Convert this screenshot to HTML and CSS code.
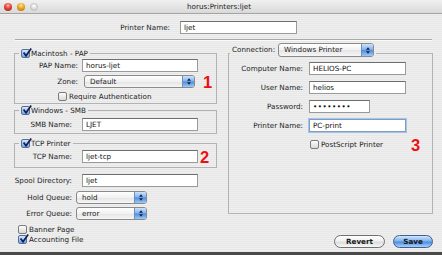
FILE: index.html
```html
<!DOCTYPE html>
<html lang="en">
<head>
  <meta charset="UTF-8" />
  <title>horus:Printers:ljet</title>
  <link rel="stylesheet" href="styles.css">
</head>
<body>
  <div class="window">
    <div class="titlebar">
      <div class="lights">
        <span class="light close"></span>
        <span class="light mini"></span>
        <span class="light zoom"></span>
      </div>
      <div class="title">horus:Printers:ljet</div>
    </div>

    <div class="content">
      <div class="nameRow">
        <label class="nameLabel">Printer Name:</label>
        <input class="field nameField" value="ljet">
      </div>
      <div class="separator"></div>

      <div class="columns">
        <div class="leftCol">
          <fieldset class="group pap">
            <legend class="groupHead">
              <span class="check on"><svg viewBox="0 0 10 10"><path d="M1.6 4.6 L4 7.8 L9.2 0.6"/></svg></span>
              Macintosh - PAP
            </legend>
            <div class="row">
              <label class="lbl">PAP Name:</label>
              <input class="field wide" value="horus-ljet">
            </div>
            <div class="row">
              <label class="lbl">Zone:</label>
              <div class="popup zonePopup">
                <span class="popupText">Default</span>
                <span class="popupCap"><svg viewBox="0 0 5 8"><path d="M2.5 0 L5 3 H0Z M0 5 H5 L2.5 8Z"/></svg></span>
              </div>
              <span class="mark mark1">1</span>
            </div>
            <div class="row checkRow authRow">
              <span class="check"></span>
              Require Authentication
            </div>
          </fieldset>

          <fieldset class="group smb">
            <legend class="groupHead">
              <span class="check on"><svg viewBox="0 0 10 10"><path d="M1.6 4.6 L4 7.8 L9.2 0.6"/></svg></span>
              Windows - SMB
            </legend>
            <div class="row">
              <label class="lbl short">SMB Name:</label>
              <input class="field wide" value="LJET">
            </div>
          </fieldset>

          <fieldset class="group tcp">
            <legend class="groupHead">
              <span class="check on"><svg viewBox="0 0 10 10"><path d="M1.6 4.6 L4 7.8 L9.2 0.6"/></svg></span>
              TCP Printer
            </legend>
            <div class="row">
              <label class="lbl short">TCP Name:</label>
              <input class="field wide" value="ljet-tcp">
              <span class="mark mark2">2</span>
            </div>
          </fieldset>

          <div class="spool">
            <div class="row">
              <label class="lbl spoolLbl">Spool Directory:</label>
              <input class="field wide" value="ljet">
            </div>
            <div class="row holdRow">
              <label class="lbl spoolLbl">Hold Queue:</label>
              <div class="popup queuePopup">
                <span class="popupText">hold</span>
                <span class="popupCap"><svg viewBox="0 0 5 8"><path d="M2.5 0 L5 3 H0Z M0 5 H5 L2.5 8Z"/></svg></span>
              </div>
            </div>
            <div class="row errorRow">
              <label class="lbl spoolLbl">Error Queue:</label>
              <div class="popup queuePopup">
                <span class="popupText">error</span>
                <span class="popupCap"><svg viewBox="0 0 5 8"><path d="M2.5 0 L5 3 H0Z M0 5 H5 L2.5 8Z"/></svg></span>
              </div>
            </div>
            <div class="checkRow bannerRow">
              <span class="check"></span>
              Banner Page
            </div>
            <div class="checkRow acctRow">
              <span class="check on"><svg viewBox="0 0 10 10"><path d="M1.6 4.6 L4 7.8 L9.2 0.6"/></svg></span>
              Accounting File
            </div>
          </div>
        </div>

        <div class="rightCol">
          <fieldset class="group conn">
            <legend class="connHead">
              <span>Connection:</span>
              <div class="popup connPopup">
                <span class="popupText">Windows Printer</span>
                <span class="popupCap"><svg viewBox="0 0 5 8"><path d="M2.5 0 L5 3 H0Z M0 5 H5 L2.5 8Z"/></svg></span>
              </div>
            </legend>
            <div class="connGrid">
              <label class="lbl">Computer Name:</label>
              <input class="field" value="HELIOS-PC">
              <label class="lbl">User Name:</label>
              <input class="field" value="helios">
              <label class="lbl">Password:</label>
              <input class="field pass" type="password" value="helios12">
              <label class="lbl">Printer Name:</label>
              <input class="field focused" value="PC-print">
              <div class="checkRow psRow">
                <span class="check"></span>
                PostScript Printer
              </div>
              <span class="mark mark3">3</span>
            </div>
          </fieldset>

          <div class="buttons">
            <button class="btn revert">Revert</button>
            <button class="btn save">Save</button>
          </div>
        </div>
      </div>
    </div>
  </div>
</body>
</html>
```

FILE: styles.css
```css
* {
  box-sizing: border-box;
}
body {
  margin: 0;
  width: 442px;
  height: 255px;
  overflow: hidden;
  background: #4a4a4a;
  font-family: "DejaVu Sans", sans-serif;
  font-size: 7.2px;
  color: #1c1c1c;
}
.window {
  height: 252px;
  display: flex;
  flex-direction: column;
  background: repeating-linear-gradient(to bottom, #efefef 0 1px, #e7e7e7 1px 2px);
}
.titlebar {
  height: 14px;
  flex: none;
  display: flex;
  align-items: center;
  border-bottom: 1px solid #a3a3a3;
  background: linear-gradient(#f0f0f0, #d9d9d9);
  position: relative;
}
.lights {
  display: flex;
  gap: 5px;
  padding-left: 4px;
}
.light {
  width: 8px;
  height: 8px;
  border-radius: 50%;
}
.close {
  background: radial-gradient(circle at 50% 30%, #ffb3a8 0, #e0443a 45%, #a3160e 100%);
}
.mini {
  background: radial-gradient(circle at 50% 30%, #ffe6a0 0, #eaa51e 45%, #a86a05 100%);
}
.zoom {
  background: radial-gradient(circle at 50% 30%, #ffffff 0, #e2e2e2 50%, #bcbcbc 100%);
  border: 1px solid #c4c4c4;
}
.title {
  flex: 1;
  text-align: center;
  margin-left: -42px;
  color: #222;
}
.content {
  flex: 1;
  padding: 0 9px 0 14px;
}
.nameRow {
  display: flex;
  align-items: center;
  gap: 10px;
  margin-top: 7px;
}
.nameLabel {
  width: 156px;
  text-align: right;
}
.field {
  height: 13px;
  border: 1px solid #9a9a9a;
  border-top-color: #6e6e6e;
  background: #fff;
  padding: 0 3px;
  font: inherit;
  color: #111;
  outline: none;
  margin: 0;
}
.nameField {
  width: 117px;
}
.separator {
  margin: 5px 1px 0 1px;
  height: 2px;
  border-top: 1px solid #a8a8a8;
  border-bottom: 1px solid #fbfbfb;
}
.columns {
  display: flex;
  gap: 11px;
  margin-top: 2px;
}
.leftCol {
  width: 203px;
  padding-top: 5px;
}
.rightCol {
  width: 205px;
}
.group {
  margin: 0;
  padding: 0;
  border: 1px solid #b2b2b2;
  min-inline-size: 0;
  position: relative;
}
.groupHead {
  display: flex;
  align-items: center;
  gap: 1px;
  height: 10px;
  margin-left: 4px;
  padding: 0 2px;
}
.row {
  display: flex;
  align-items: center;
  height: 13px;
}
.lbl {
  text-align: right;
  flex: none;
}
.pap {
  padding: 1px 0 1px 0;
}
.pap .row + .row {
  margin-top: 3px;
}
.pap .lbl {
  width: 63px;
  margin-right: 4px;
}
.wide {
  width: 116px;
}
.popup {
  display: flex;
  height: 13px;
  border: 1px solid #8a8a8a;
  border-radius: 3px;
  background: linear-gradient(#ffffff, #f1f1f1 50%, #e4e4e4 51%, #f6f6f6);
  overflow: hidden;
}
.popupText {
  flex: 1;
  padding-left: 5px;
  line-height: 11px;
}
.popupCap {
  width: 12px;
  display: flex;
  align-items: center;
  justify-content: center;
  border-left: 1px solid #6d8fbd;
  background: linear-gradient(#cfe3fb, #7fb0ec 48%, #4d8ddb 52%, #9ccaf7);
}
.popupCap svg {
  width: 4px;
  height: 7px;
}
.popupCap path {
  fill: #10244a;
}
.zonePopup {
  width: 111px;
  margin-left: 2px;
}
.mark {
  font-family: "Liberation Sans", sans-serif;
  font-weight: bold;
  font-size: 16.5px;
  line-height: 12px;
  color: #ee1010;
}
.mark1 {
  margin-left: 8px;
}
.mark2 {
  margin-left: 2px;
}
.checkRow {
  display: flex;
  align-items: center;
  gap: 2px;
}
.authRow {
  height: 11px;
  margin-top: 3px;
  padding-left: 43px;
}
.check {
  width: 9px;
  height: 9px;
  flex: none;
  border: 1px solid #7c7c7c;
  border-radius: 2px;
  background: linear-gradient(#fdfdfd, #d9d9d9);
  position: relative;
}
.check.on {
  border-color: #526f9b;
  background: linear-gradient(#d6e7fc, #76a6e3);
}
.check svg {
  position: absolute;
  left: 0;
  top: -2px;
  width: 10px;
  height: 10px;
  overflow: visible;
}
.check path {
  fill: none;
  stroke: #102054;
  stroke-width: 1.7;
}
.smb {
  margin-top: 1px;
  padding: 3px 0 2px 0;
}
.tcp {
  margin-top: 4px;
  padding: 2px 0 4px 0;
}
.short {
  width: 57px;
  margin-right: 10px;
}
.spool {
  margin-top: 6px;
}
.spoolLbl {
  width: 58px;
  margin-right: 10px;
}
.queuePopup {
  width: 71px;
  margin-left: -6px;
}
.holdRow {
  margin-top: 4px;
}
.errorRow {
  margin-top: 3px;
}
.bannerRow {
  height: 10px;
  margin-top: 4px;
  padding-left: 4px;
}
.acctRow {
  height: 10px;
  padding-left: 4px;
}
.conn {
  padding: 0 0 62px 0;
}
.connHead {
  display: flex;
  align-items: flex-start;
  gap: 3px;
  margin-left: 1px;
  padding: 0 2px 6px 2px;
}
.connHead > span {
  line-height: 14px;
}
.connPopup {
  width: 96px;
  height: 14px;
}
.connPopup .popupText {
  line-height: 12px;
}
.connGrid {
  display: grid;
  grid-template-columns: 74px 97px 1fr;
  grid-auto-rows: 13px;
  column-gap: 6px;
  row-gap: 6px;
  align-items: center;
  margin-top: -1px;
}
.connGrid .field {
  grid-column: 2;
}
.connGrid .lbl {
  grid-column: 1;
}
.pass {
  width: 61px;
  letter-spacing: 0.5px;
}
.focused {
  border-color: #7f9cc4;
  box-shadow: 0 0 0 1px #a9c4ea;
}
.psRow {
  grid-column: 2;
  padding-left: 1px;
}
.mark3 {
  grid-column: 3;
  margin-left: -1px;
}
.buttons {
  display: flex;
  justify-content: flex-end;
  gap: 8px;
  margin-top: 21px;
}
.btn {
  height: 13px;
  padding: 0;
  font: inherit;
  font-weight: bold;
  color: #1a1a1a;
  border: 1px solid #6f6f6f;
  border-radius: 7px;
  line-height: 11px;
}
.revert {
  width: 51px;
  background: linear-gradient(#ffffff, #f0f0f0 45%, #dcdcdc 55%, #f8f8f8);
}
.save {
  width: 40px;
  border-color: #3f5f8e;
  background: linear-gradient(#d3e6fd, #7fb2ee 45%, #4a8ee0 55%, #a8d2fb);
}
```
